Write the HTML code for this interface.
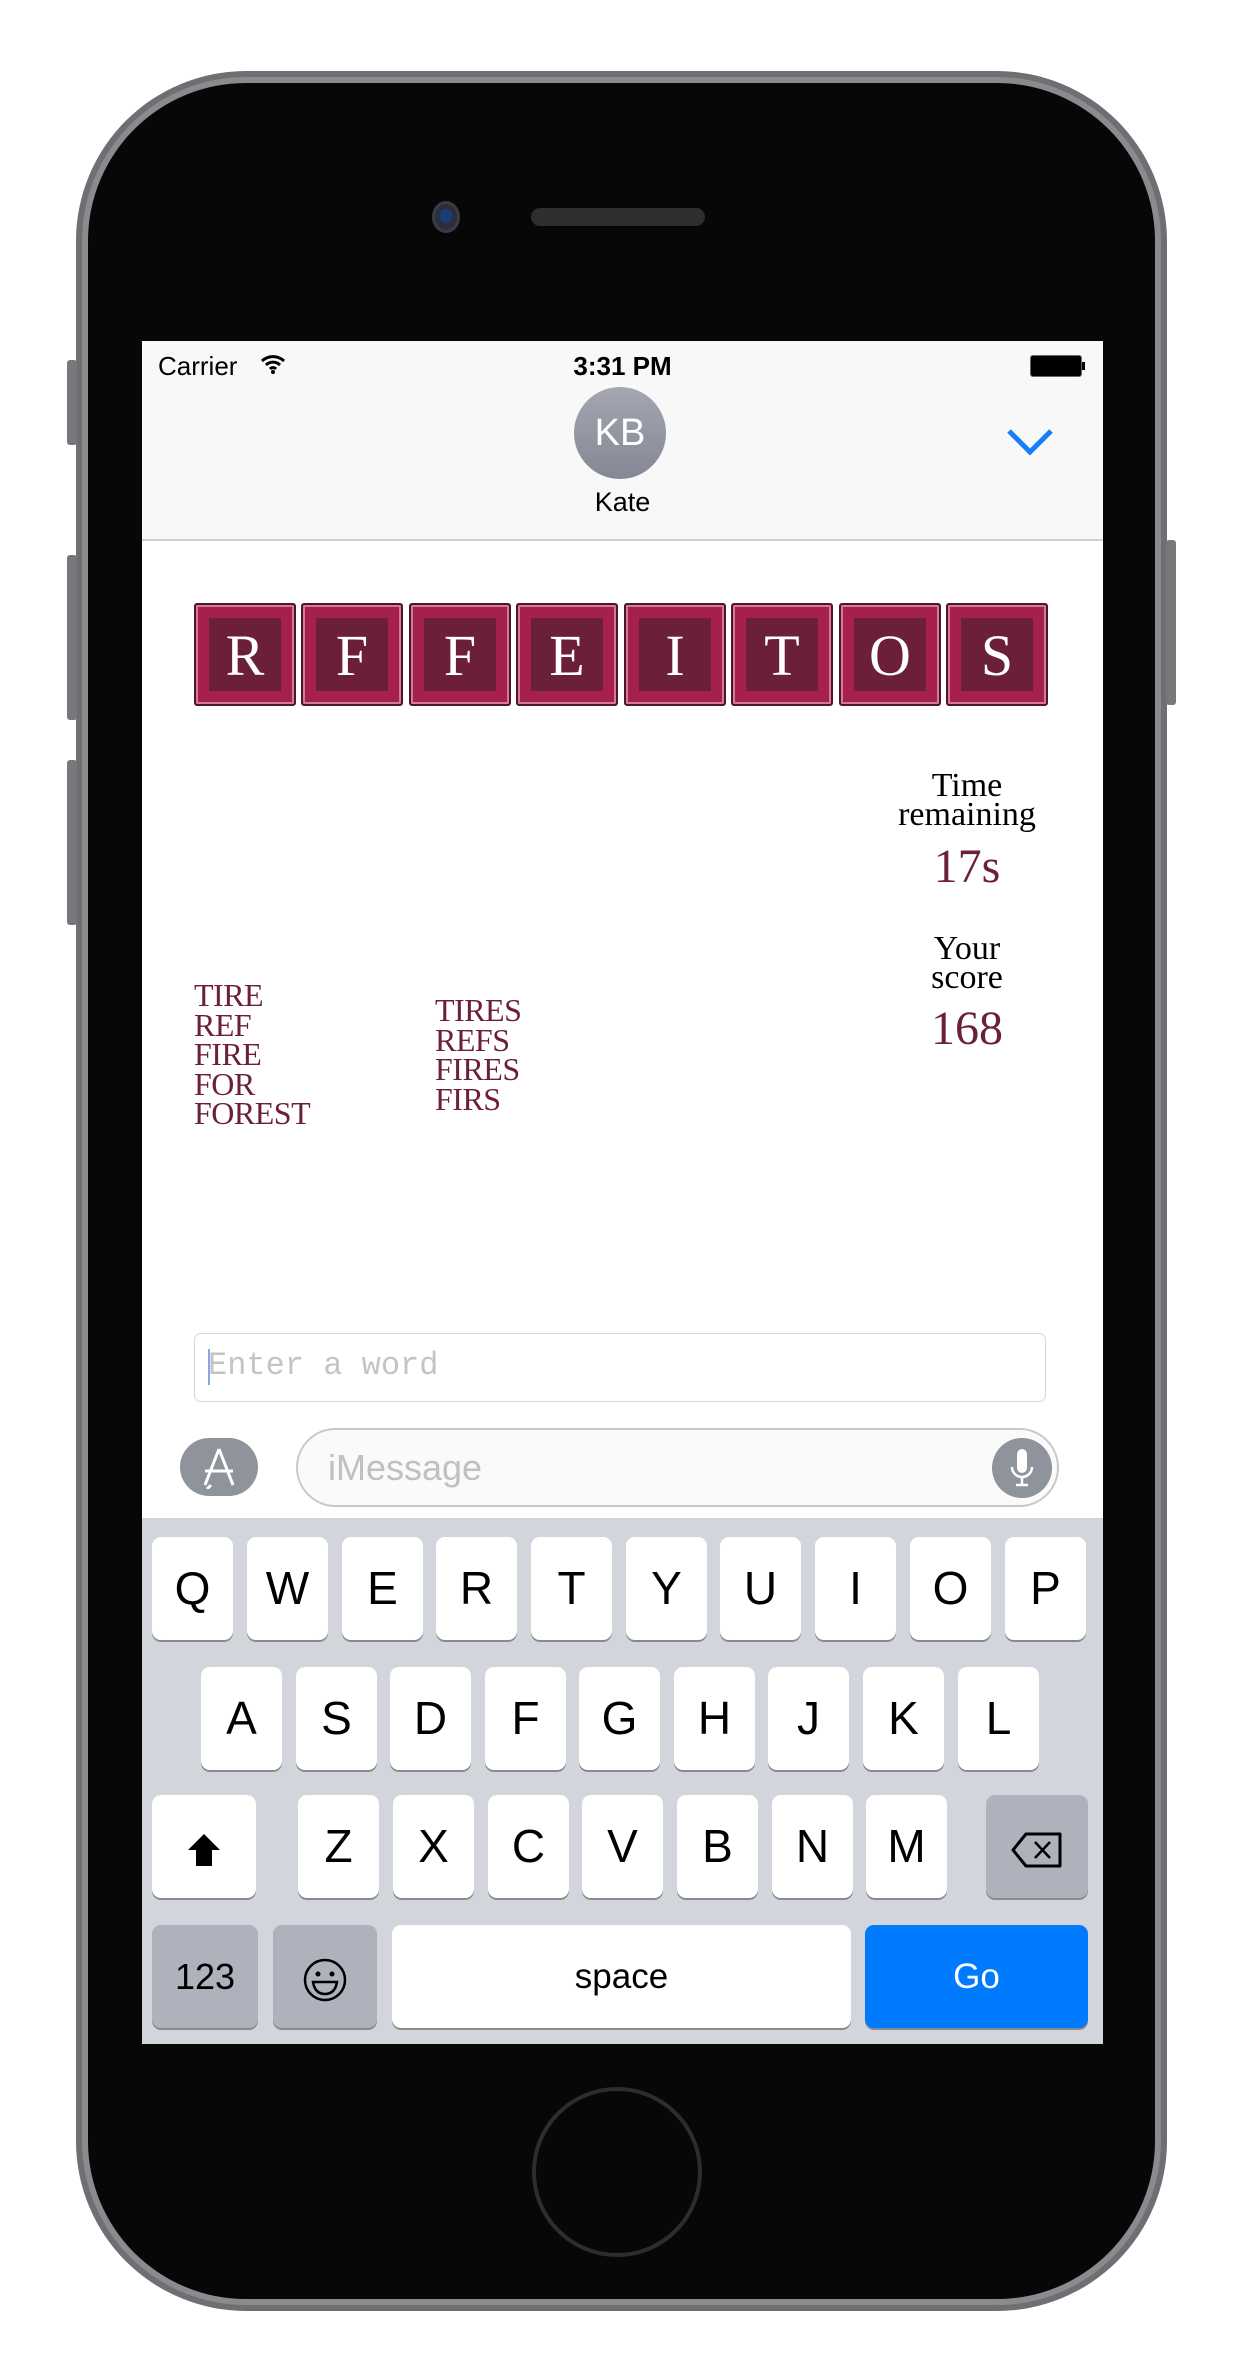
<!DOCTYPE html>
<html><head><meta charset="utf-8"><style>
*{margin:0;padding:0;box-sizing:border-box}
body{width:1251px;height:2379px;background:#fff;position:relative;overflow:hidden;font-family:"Liberation Sans",sans-serif}
.abs{position:absolute}
.phone{left:76px;top:71px;width:1091px;height:2240px;border-radius:170px;background:#6e6e73;}
.phone2{left:82px;top:77px;width:1079px;height:2228px;border-radius:164px;background:#8a8a8f}
.phone3{left:88px;top:83px;width:1067px;height:2216px;border-radius:158px;background:#070707}
.screen{left:142px;top:341px;width:961px;height:1703px;background:#fff;overflow:hidden}
.hdr{left:0;top:0;width:961px;height:200px;background:#f8f8f8;border-bottom:2px solid #d0d0d4}
.tile{position:absolute;top:262px;width:102px;height:103px;background:#a51f4f;border:2px solid #4e1629;box-shadow:inset 0 0 0 2px #d27a98;border-radius:3px}
.tile div{position:absolute;left:13px;top:13px;width:72px;height:73px;background:#6b1f3b;color:#fff;font-family:"Liberation Serif",serif;font-size:58px;text-align:center;line-height:76px}
.ser{font-family:"Liberation Serif",serif}
.w{font-family:"Liberation Serif",serif;color:#6b1f3b;font-size:32px;line-height:29.5px;letter-spacing:-0.5px}
.kb{left:0;top:1177px;width:961px;height:526px;background:#d2d5db}
.k{position:absolute;width:81px;height:103px;background:#fff;border-radius:9px;box-shadow:0 2px 0 #898a8d;font-size:46px;text-align:center;line-height:103px;color:#000}
.g{background:#adb2bc}
</style></head><body>
<div class="abs phone"></div><div class="abs phone2"></div><div class="abs phone3"></div>
<div class="abs" style="left:67px;top:360px;width:10px;height:85px;background:#77777c;border-radius:3px"></div>
<div class="abs" style="left:67px;top:555px;width:10px;height:165px;background:#77777c;border-radius:3px"></div>
<div class="abs" style="left:67px;top:760px;width:10px;height:165px;background:#77777c;border-radius:3px"></div>
<div class="abs" style="left:1166px;top:540px;width:10px;height:165px;background:#77777c;border-radius:3px"></div>
<div class="abs" style="left:432px;top:201px;width:28px;height:32px;border-radius:50%;background:#2a2d3a;border:3px solid #3a3c44"></div>
<div class="abs" style="left:440px;top:209px;width:12px;height:14px;border-radius:50%;background:#1a3c78"></div>
<div class="abs" style="left:531px;top:208px;width:174px;height:18px;border-radius:9px;background:#2e2e30"></div>
<div class="abs" style="left:532px;top:2087px;width:170px;height:170px;border-radius:50%;border:4px solid #2c2d33"></div>

<div class="abs screen">
 <div class="abs hdr">
  <div class="abs" style="left:16px;top:10px;font-size:26px">Carrier</div>
  <svg class="abs" style="left:118px;top:12px" width="26" height="22" viewBox="0 0 26 22"><path d="M2 8a16 16 0 0 1 22 0M6 12a10 10 0 0 1 14 0M10 16a4 4 0 0 1 6 0" stroke="#000" stroke-width="3" fill="none"/><circle cx="13" cy="19" r="2" fill="#000"/></svg>
  <div class="abs" style="left:0;width:961px;text-align:center;top:10px;font-size:26px;font-weight:bold">3:31 PM</div>
  <div class="abs" style="left:888px;top:14px;width:52px;height:22px;background:#000;border-radius:3px;border:1px solid #666"></div>
  <div class="abs" style="left:940px;top:21px;width:3px;height:8px;background:#000"></div>
  <div class="abs" style="left:432px;top:46px;width:92px;height:92px;border-radius:50%;background:linear-gradient(#a4a7b1,#858895);color:#fff;font-size:38px;text-align:center;line-height:92px">KB</div>
  <div class="abs" style="left:0;width:961px;text-align:center;top:146px;font-size:27px">Kate</div>
  <svg class="abs" style="left:864px;top:86px" width="48" height="30" viewBox="0 0 48 30"><path d="M3 4L24 25L45 4" stroke="#157efb" stroke-width="5" fill="none"/></svg>
 </div>
 <div class="tile" style="left:52px"><div>R</div></div>
 <div class="tile" style="left:159px"><div>F</div></div>
 <div class="tile" style="left:267px"><div>F</div></div>
 <div class="tile" style="left:374px"><div>E</div></div>
 <div class="tile" style="left:482px"><div>I</div></div>
 <div class="tile" style="left:589px"><div>T</div></div>
 <div class="tile" style="left:697px"><div>O</div></div>
 <div class="tile" style="left:804px"><div>S</div></div>

 <div class="abs ser" style="left:715px;width:220px;text-align:center;top:430px;font-size:34px;line-height:29px">Time<br>remaining</div>
 <div class="abs ser" style="left:715px;width:220px;text-align:center;top:498px;font-size:48px;color:#6b1f3b">17s</div>
 <div class="abs ser" style="left:715px;width:220px;text-align:center;top:593px;font-size:34px;line-height:29px">Your<br>score</div>
 <div class="abs ser" style="left:715px;width:220px;text-align:center;top:660px;font-size:48px;color:#6b1f3b">168</div>
 <div class="abs w" style="left:52px;top:640px">TIRE<br>REF<br>FIRE<br>FOR<br>FOREST</div>
 <div class="abs w" style="left:293px;top:655px">TIRES<br>REFS<br>FIRES<br>FIRS</div>

 <div class="abs" style="left:52px;top:992px;width:852px;height:69px;border:1px solid #d6d6d6;border-radius:7px"></div>
 <div class="abs" style="left:66px;top:1006px;font-family:'Liberation Mono',monospace;font-size:32px;color:#c4c4c8">Enter a word</div>
 <div class="abs" style="left:66px;top:1008px;width:2px;height:36px;background:#8aa7e0"></div>
 <div class="abs" style="left:38px;top:1097px;width:78px;height:58px;border-radius:29px;background:#8e939c"></div>
 <svg class="abs" style="left:57px;top:1104px" width="40" height="44" viewBox="0 0 40 44"><path d="M20 4L6 40M20 4L34 40M6 26H34M12 40L8 44" stroke="#fff" stroke-width="3" fill="none"/></svg>
 <div class="abs" style="left:154px;top:1087px;width:763px;height:79px;border:2px solid #c8c8cc;border-radius:40px;background:#fafafa"></div>
 <div class="abs" style="left:186px;top:1106px;font-size:36px;color:#c0c0c4">iMessage</div>
 <div class="abs" style="left:850px;top:1097px;width:60px;height:60px;border-radius:50%;background:#8e939c"></div>
 <svg class="abs" style="left:865px;top:1106px" width="30" height="44" viewBox="0 0 30 44"><rect x="10" y="2" width="10" height="24" rx="5" fill="#fff"/><path d="M5 20a10 10 0 0 0 20 0M15 30V38M9 38H21" stroke="#fff" stroke-width="2.5" fill="none"/></svg>

 <div class="abs kb">
  <div class="k" style="left:10px;top:19px">Q</div><div class="k" style="left:105px;top:19px">W</div><div class="k" style="left:200px;top:19px">E</div><div class="k" style="left:294px;top:19px">R</div><div class="k" style="left:389px;top:19px">T</div><div class="k" style="left:484px;top:19px">Y</div><div class="k" style="left:578px;top:19px">U</div><div class="k" style="left:673px;top:19px">I</div><div class="k" style="left:768px;top:19px">O</div><div class="k" style="left:863px;top:19px">P</div>
  <div class="k" style="left:59px;top:149px">A</div><div class="k" style="left:154px;top:149px">S</div><div class="k" style="left:248px;top:149px">D</div><div class="k" style="left:343px;top:149px">F</div><div class="k" style="left:437px;top:149px">G</div><div class="k" style="left:532px;top:149px">H</div><div class="k" style="left:626px;top:149px">J</div><div class="k" style="left:721px;top:149px">K</div><div class="k" style="left:816px;top:149px">L</div>
  <div class="k" style="left:10px;top:277px;width:104px"><svg width="40" height="40" viewBox="0 0 40 40" style="vertical-align:middle"><path d="M20 4L4 20H12V36H28V20H36Z" fill="#000"/></svg></div>
  <div class="k" style="left:156px;top:277px">Z</div><div class="k" style="left:251px;top:277px">X</div><div class="k" style="left:346px;top:277px">C</div><div class="k" style="left:440px;top:277px">V</div><div class="k" style="left:535px;top:277px">B</div><div class="k" style="left:630px;top:277px">N</div><div class="k" style="left:724px;top:277px">M</div>
  <div class="k g" style="left:844px;top:277px;width:102px"><svg width="54" height="38" viewBox="0 0 54 38" style="vertical-align:middle"><path d="M16 3H50V35H16L3 19Z" stroke="#000" stroke-width="3" fill="none" stroke-linejoin="round"/><path d="M25 11L40 27M40 11L25 27" stroke="#000" stroke-width="2.5"/></svg></div>
  <div class="k g" style="left:10px;top:407px;width:106px;font-size:36px">123</div>
  <div class="k g" style="left:131px;top:407px;width:104px"><svg width="46" height="46" viewBox="0 0 46 46" style="vertical-align:middle"><circle cx="23" cy="23" r="20" stroke="#000" stroke-width="2.5" fill="none"/><circle cx="16" cy="17" r="2.5"/><circle cx="30" cy="17" r="2.5"/><path d="M11 25H35Q33 37 23 37Q13 37 11 25Z" stroke="#000" stroke-width="2.5" fill="none"/></svg></div>
  <div class="k" style="left:250px;top:407px;width:459px;font-size:35px">space</div>
  <div class="k" style="left:723px;top:407px;width:223px;background:#007aff;color:#fff;font-size:35px">Go</div>
 </div>
</div>
</body></html>
